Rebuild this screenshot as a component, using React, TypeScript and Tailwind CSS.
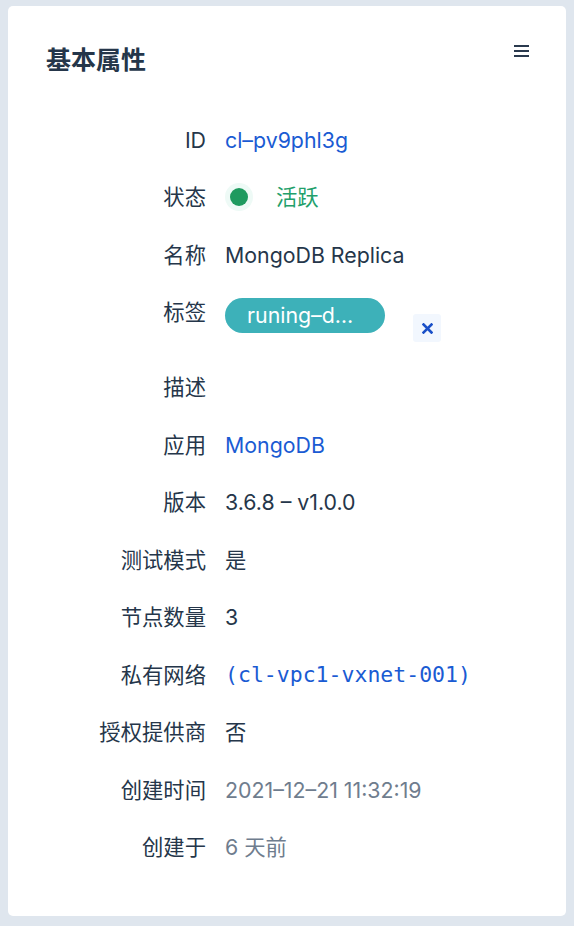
import React from "react";

const sans = "font-['Inter','Noto_Sans_CJK_SC',sans-serif]";

function Row({ label, children, tall }: { label: string; children: React.ReactNode; tall?: boolean }) {
  return (
    <div className={`flex items-start ${tall ? "h-[47.6px]" : ""}`}>
      <div className="w-[160px] shrink-0 text-right leading-[30px] text-[#25364a]">{label}</div>
      <div className="ml-[19px] flex min-w-0 items-start leading-[30px]">{children}</div>
    </div>
  );
}

export default function App() {
  return (
    <div className={`min-h-[926px] w-[574px] bg-[#dfe6ee] px-[8px] pt-[6px] pb-[10px] ${sans}`}>
      <div className="h-[910px] rounded-[5px] bg-white pl-[38px] pr-[37px] pt-[38px]">
        <div className="flex items-start justify-between">
          <h1 className="text-[25px] font-bold leading-[32px] text-[#25364a]">基本属性</h1>
          <svg className="mt-[1px]" width="15" height="12" viewBox="0 0 15 12">
            <rect x="0" y="0" width="15" height="2" fill="#2a3a4e" />
            <rect x="0" y="5" width="15" height="2" fill="#2a3a4e" />
            <rect x="0" y="10" width="15" height="2" fill="#2a3a4e" />
          </svg>
        </div>
        <div className="mt-[48.5px] flex flex-col gap-[27.5px] text-[21.33px]">
          <Row label="ID">
            <span className="text-[#1a5bd3]">cl–pv9phl3g</span>
          </Row>
          <Row label="状态">
            <span className="flex h-[30px] items-center">
              <span className="flex h-[28px] w-[28px] items-center justify-center rounded-full bg-[#eefaf6]">
                <span className="h-[18px] w-[18px] rounded-full bg-[#1e9a5f]" />
              </span>
            </span>
            <span className="ml-[23px] text-[#22a06b]">活跃</span>
          </Row>
          <Row label="名称">
            <span className="text-[#25364a]">MongoDB Replica</span>
          </Row>
          <Row label="标签" tall>
            <span className="mt-[1px] flex h-[35px] w-[160px] items-center rounded-full bg-[#3db1b9] pl-[22px] text-[21.33px] leading-[35px] text-white">
              runing–d…
            </span>
            <span className="ml-[28px] mt-[17px] flex h-[28px] w-[28px] items-center justify-center rounded-[3px] bg-[#f2f7fe]">
              <svg width="11" height="11" viewBox="0 0 11 11">
                <path d="M1.5 1.5 L9.5 9.5 M9.5 1.5 L1.5 9.5" stroke="#1a50c8" strokeWidth="2.6" strokeLinecap="square" />
              </svg>
            </span>
          </Row>
          <Row label="描述">
            <span />
          </Row>
          <Row label="应用">
            <span className="text-[#1a5bd3]">MongoDB</span>
          </Row>
          <Row label="版本">
            <span className="text-[#25364a]">3.6.8 – v1.0.0</span>
          </Row>
          <Row label="测试模式">
            <span className="text-[#25364a]">是</span>
          </Row>
          <Row label="节点数量">
            <span className="text-[#25364a]">3</span>
          </Row>
          <Row label="私有网络">
            <span className="font-['DejaVu_Sans_Mono',monospace] text-[21.5px] text-[#1a5bd3]">(cl-vpc1-vxnet-001)</span>
          </Row>
          <Row label="授权提供商">
            <span className="text-[#25364a]">否</span>
          </Row>
          <Row label="创建时间">
            <span className="text-[#6f7d8e]">2021–12–21 11:32:19</span>
          </Row>
          <Row label="创建于">
            <span className="text-[#6f7d8e]">6 天前</span>
          </Row>
        </div>
      </div>
    </div>
  );
}
